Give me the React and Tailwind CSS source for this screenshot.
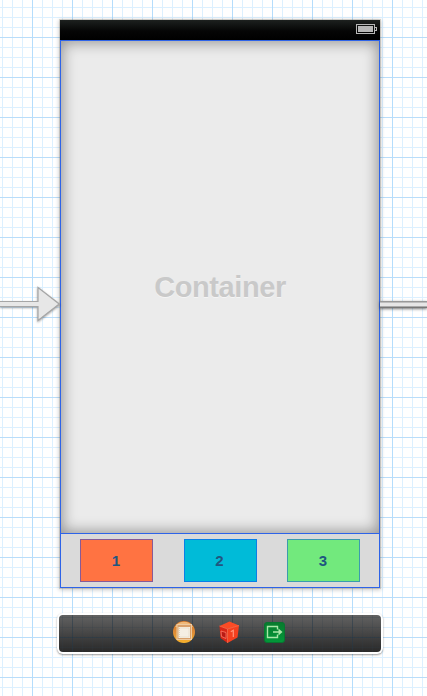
import React from "react";

const GRID =
  "bg-[linear-gradient(90deg,#b5ddfc_1px,transparent_1px),linear-gradient(#b9ddfa_1px,transparent_1px),linear-gradient(90deg,#dcf0ff_1px,transparent_1px),linear-gradient(#dcf0ff_1px,transparent_1px)] bg-[size:40px_40px,40px_40px,10px_10px,10px_10px] bg-[position:32px_37px,32px_37px,2px_7px,2px_7px]";

function Battery() {
  return (
    <svg width="21" height="10" viewBox="0 0 21 10" shapeRendering="crispEdges">
      <rect x="0.5" y="0.5" width="18" height="9" fill="none" stroke="#b7b7b7" />
      <rect x="2" y="2" width="15" height="6" fill="#b7b7b7" />
      <path d="M19 3.5h1.5v3H19" fill="none" stroke="#b7b7b7" />
    </svg>
  );
}

function StatusBar() {
  return (
    <div className="flex h-5 items-start justify-end bg-[linear-gradient(#1d211f,#050505_55%,#000)] pr-[3px] pt-1">
      <Battery />
    </div>
  );
}

function Tab({ label, className }) {
  return (
    <div
      className={`flex h-[43px] w-[73px] items-center justify-center border pr-px text-[15px] font-bold leading-none text-[#205680] ${className}`}
    >
      {label}
    </div>
  );
}

function Scene() {
  return (
    <div className="ml-[60px] h-[568px] w-80 shadow-[0_0_0_1px_rgba(125,115,95,0.25),0_1px_4px_1px_rgba(0,0,0,0.22)]">
      <StatusBar />
      <div className="flex h-[548px] flex-col border border-[#2d63e8] bg-[#dadada]">
        <div className="flex h-[492px] items-center justify-center bg-[#ebebeb] shadow-[inset_0_0_14px_2px_rgba(0,0,0,0.36)]">
          <span className="text-[29px] font-bold leading-none tracking-[-0.4px] text-[#c9c9c9] [text-shadow:0_1px_0_#f4f4f4]">
            Container
          </span>
        </div>
        <div className="flex h-[54px] gap-x-[30.5px] border-t border-[#2d63e8] pl-[19px] pt-[5px]">
          <Tab label="1" className="border-[#885a96] bg-[#ff7342]" />
          <Tab label="2" className="border-[#0a80e6] bg-[#00bbd8]" />
          <Tab label="3" className="border-[#3c9cad] bg-[#72e97d]" />
        </div>
      </div>
    </div>
  );
}

function ControllerIcon() {
  return (
    <svg width="24" height="24" viewBox="0 0 24 24">
      <defs>
        <linearGradient id="orange" x2="0" y2="1">
          <stop stopColor="#d97724" />
          <stop offset=".5" stopColor="#dd8a37" />
          <stop offset="1" stopColor="#f7b32c" />
        </linearGradient>
      </defs>
      <circle cx="12" cy="12" r="11" fill="url(#orange)" />
      <path d="M3 7a10.3 10.3 0 0 1 18 0Z" fill="#efb878" />
      <rect x="5" y="4.5" width="14.5" height="15" fill="#d9a06a" stroke="#eecb9f" />
      <rect x="6.5" y="7" width="11.5" height="11" fill="#f5efe3" />
      <rect x="7.5" y="8" width="9.5" height="9" fill="none" stroke="#dccbb0" strokeWidth=".8" strokeDasharray="1 1" />
    </svg>
  );
}

function ResponderIcon() {
  return (
    <svg width="22" height="24" viewBox="0 0 22 24">
      <path d="M11.5 1.5 21 5.5 9.5 9 1.5 6Z" fill="#fb4b25" />
      <path d="M1.5 6 9.5 9v14L2.5 18Z" fill="#d92617" />
      <path d="M9.5 9 21 5.5 19.5 17.5 9.5 23Z" fill="#f4401f" />
      <path d="M1.5 6 9.5 9 21 5.5M9.5 9v14" fill="none" stroke="#ff7350" strokeWidth=".7" />
      <path d="m3 11 5 1.5v6L3.5 16.5Z" fill="#b81a14" stroke="#ff7a66" strokeWidth=".8" />
      <path d="m12.8 11.8 2.5-1.5V17" fill="none" stroke="#ff9478" strokeWidth="1.2" />
    </svg>
  );
}

function ExitIcon() {
  return (
    <svg width="21" height="21" viewBox="0 0 21 21">
      <defs>
        <linearGradient id="green" x2="0" y2="1">
          <stop stopColor="#087b2d" />
          <stop offset="1" stopColor="#02983a" />
        </linearGradient>
      </defs>
      <rect x=".5" y=".5" width="20" height="20" rx="2.5" fill="url(#green)" stroke="#087630" />
      <path d="M13.5 7.5v-3h-10v11h10v-3" fill="none" stroke="#a8e6a8" strokeWidth="1.4" />
      <path d="M9 10h7.5" fill="none" stroke="#a8e6a8" strokeWidth="1.4" />
      <path d="M14.5 6.5 18.5 10l-4 3.5Z" fill="#a8e6a8" />
    </svg>
  );
}

function Dock() {
  return (
    <div className="ml-[57px] mt-[25px] h-[41px] w-[326px] rounded-[6px] bg-white p-[2px] shadow-[0_1px_2px_rgba(0,0,0,0.4)]">
      <div className="h-[37px] overflow-hidden rounded-[4px] bg-[linear-gradient(#626262,#292929)]">
        <div className="flex h-full items-start bg-[linear-gradient(90deg,rgba(30,55,75,0.35)_1px,transparent_1px),linear-gradient(rgba(30,55,75,0.35)_1px,transparent_1px),linear-gradient(90deg,rgba(45,62,75,0.2)_1px,transparent_1px),linear-gradient(rgba(45,62,75,0.2)_1px,transparent_1px)] bg-[size:40px_40px,40px_40px,10px_10px,10px_10px] bg-[position:13px_22px,13px_22px,3px_2px,3px_2px] pl-[113px] pt-[5px]">
          <ControllerIcon />
          <div className="ml-[22px]">
            <ResponderIcon />
          </div>
          <div className="ml-[24px] mt-[2px]">
            <ExitIcon />
          </div>
        </div>
      </div>
    </div>
  );
}

function EntryArrow() {
  return (
    <svg
      className="absolute left-0 top-[284px] [filter:drop-shadow(0_1px_1px_rgba(0,0,0,0.35))]"
      width="60"
      height="42"
      viewBox="0 0 60 42"
    >
      <path
        d="M-2 17.5H38V3.5L59.2 20 38 36.5V22.5H-2Z"
        fill="#e7e7e7"
        stroke="#a6a6a6"
        strokeWidth="1.2"
      />
    </svg>
  );
}

function Segue() {
  return (
    <div className="absolute left-[380px] top-[301px] h-[7px] w-[47px] border-y border-t-[#999] border-b-[#777] bg-[linear-gradient(#bdbdbd_1px,#e6e6e6_1px,#e6e6e6_4px,#aaa_4px)] shadow-[0_1px_3px_rgba(0,0,0,0.55)]" />
  );
}

export default function App() {
  return (
    <div
      className={`relative h-[696px] w-[427px] overflow-hidden bg-white pt-5 font-['Liberation_Sans',Arial,sans-serif] ${GRID}`}
    >
      <Scene />
      <Dock />
      <EntryArrow />
      <Segue />
    </div>
  );
}
